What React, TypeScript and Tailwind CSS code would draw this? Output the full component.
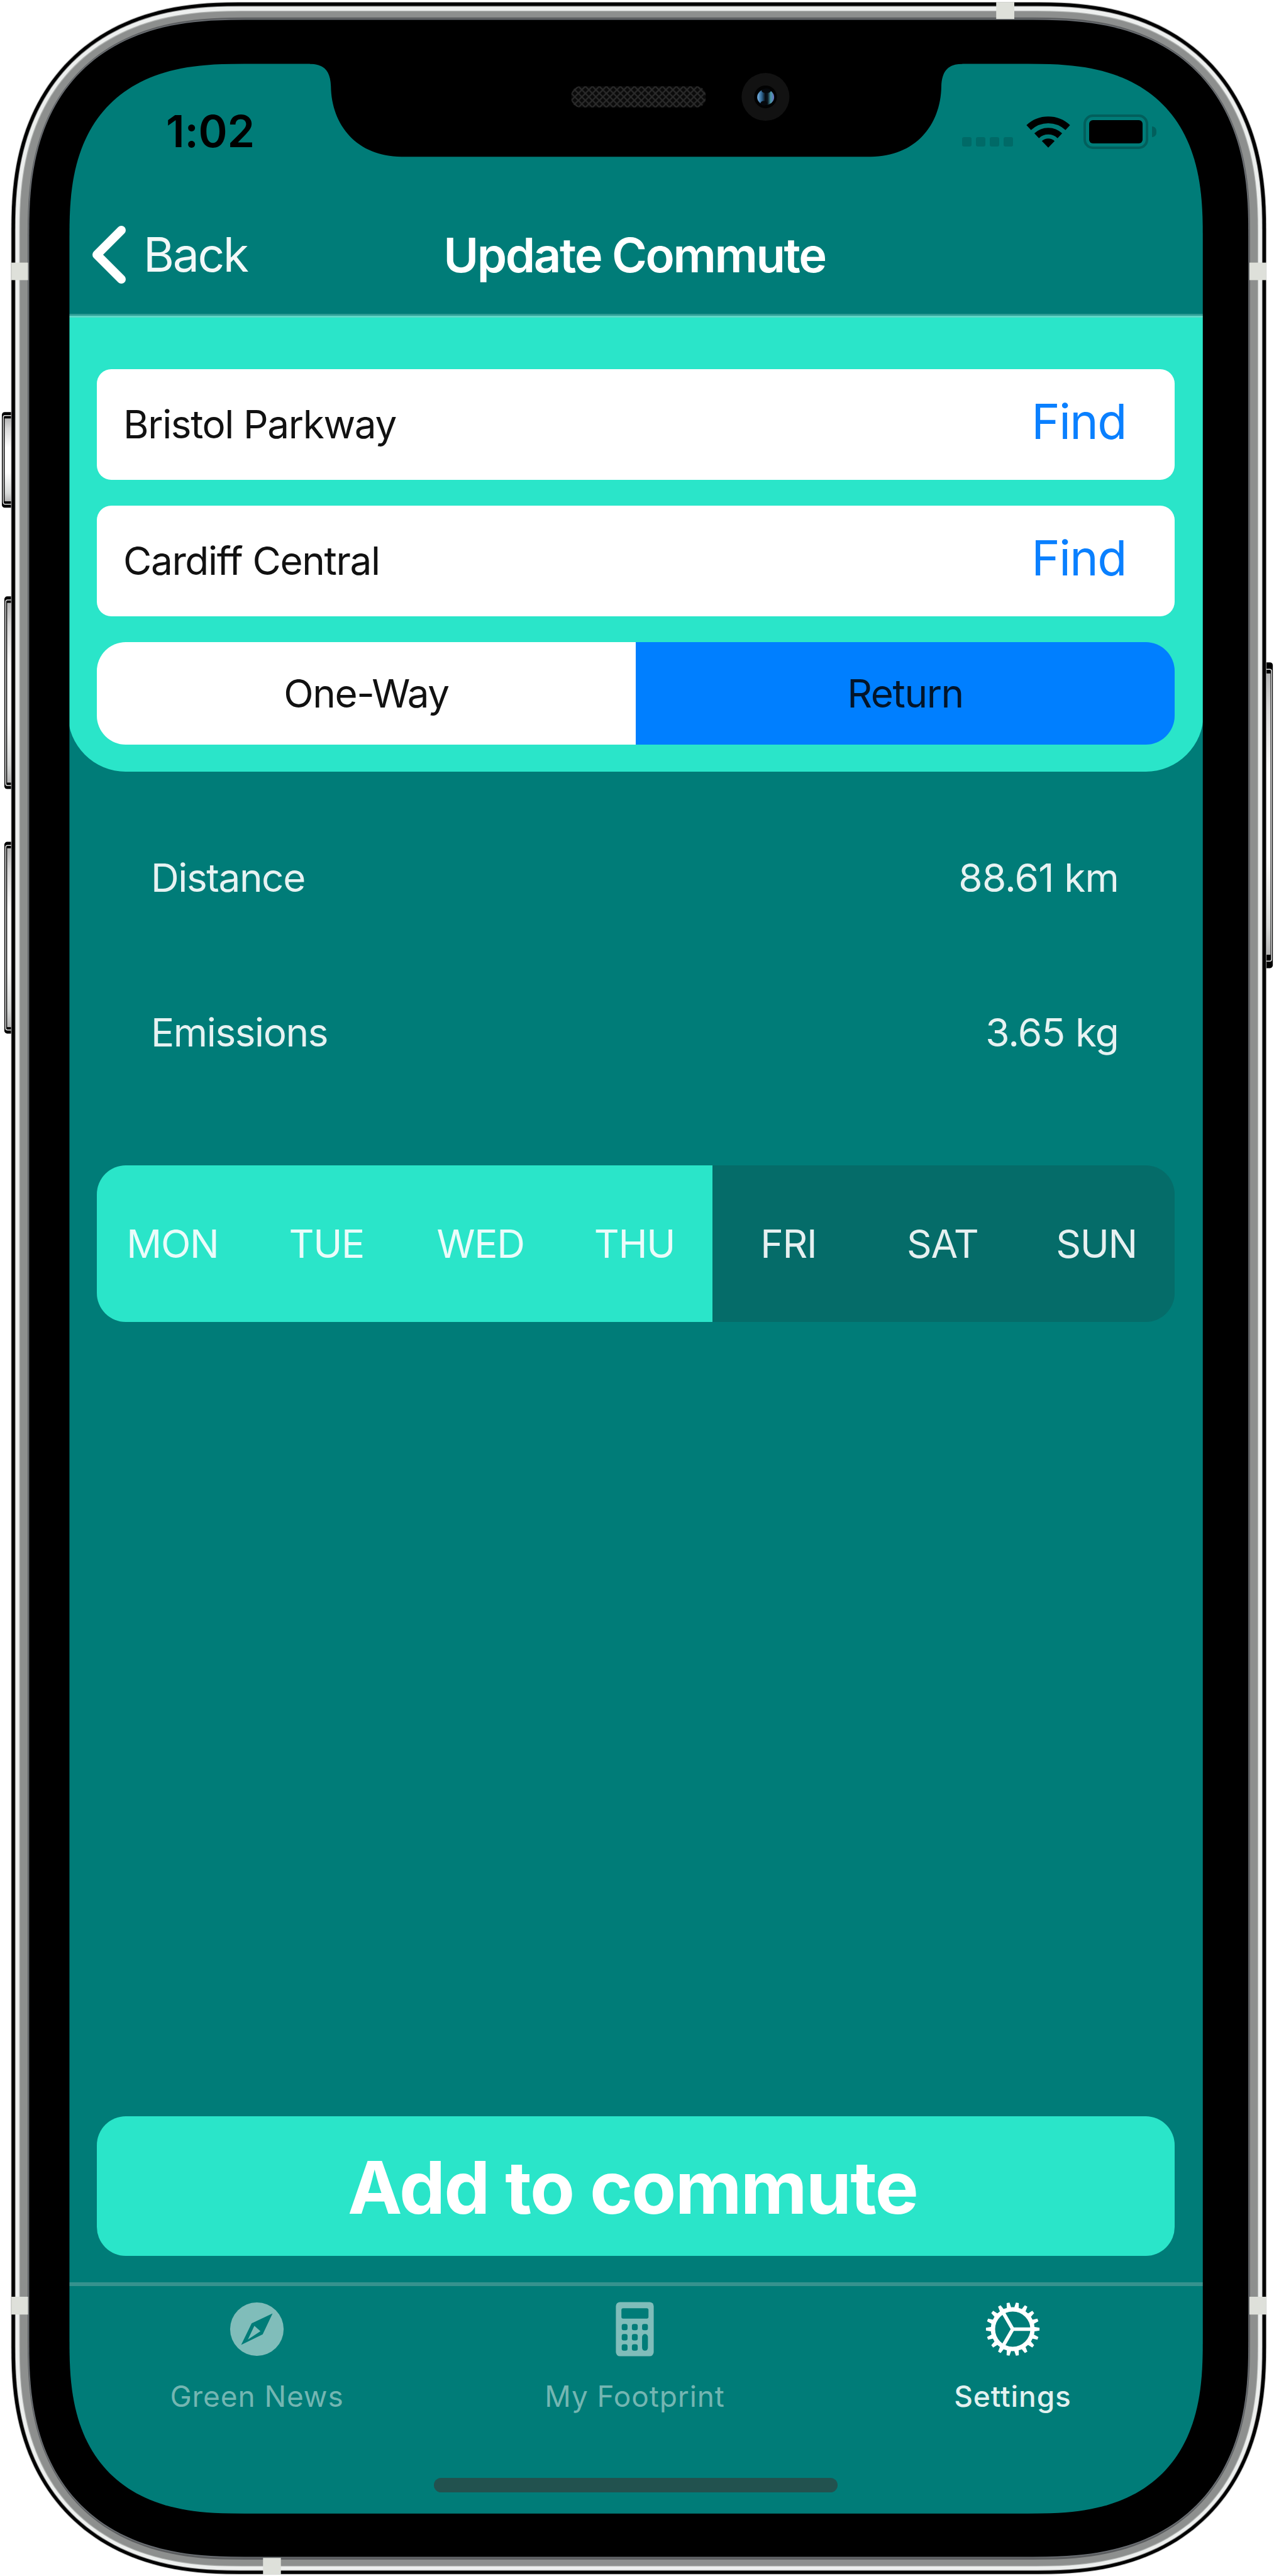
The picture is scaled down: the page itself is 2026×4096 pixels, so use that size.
import React from "react";

type Box = { l: number; t: number; r: number; b: number };

/** Path of a rectangle whose corners are superellipse arcs of extent `e` and exponent `n`. */
function smoothRect({ l, t, r, b }: Box, e: number, n: number): string {
  const steps = 48;
  const arc: [number, number][] = [];
  for (let i = 0; i <= steps; i++) {
    const a = (Math.PI / 2) * (i / steps);
    arc.push([
      e * (1 - Math.pow(Math.cos(a), 2 / n)),
      e * (1 - Math.pow(Math.sin(a), 2 / n)),
    ]);
  }
  const rev = [...arc].reverse();
  const pts = [
    ...arc.map(([x, y]) => [l + x, t + y]),
    ...rev.map(([x, y]) => [r - x, t + y]),
    ...arc.map(([x, y]) => [r - x, b - y]),
    ...rev.map(([x, y]) => [l + x, b - y]),
  ];
  return "M" + pts.map(([x, y]) => x.toFixed(2) + " " + y.toFixed(2)).join("L") + "Z";
}

const outline = smoothRect({ l: 119, t: 109.5, r: 2061, b: 4307 }, 300, 2.65);

const shell: { box: Box; e: number; n: number; fill: string }[] = [
  { box: { l: 18.8, t: 3.3, r: 2170.2, b: 4411.4 }, e: 391, n: 2.366, fill: "#a9a9a9" },
  { box: { l: 19.8, t: 4.4, r: 2169.2, b: 4410.4 }, e: 390, n: 2.366, fill: "#000000" },
  { box: { l: 25.6, t: 10, r: 2163.4, b: 4405 }, e: 386, n: 2.39, fill: "#808080" },
  { box: { l: 26.6, t: 11.2, r: 2162.4, b: 4404 }, e: 385, n: 2.39, fill: "#edefee" },
  { box: { l: 33, t: 18.4, r: 2156, b: 4397.6 }, e: 380, n: 2.43, fill: "#b0b3b1" },
  { box: { l: 34.3, t: 19.8, r: 2154.8, b: 4396.4 }, e: 379, n: 2.43, fill: "#8d8f8e" },
  { box: { l: 47.3, t: 30, r: 2142, b: 4386 }, e: 373, n: 2.5, fill: "#5b5d5f" },
  { box: { l: 48.4, t: 32.6, r: 2140.6, b: 4382.6 }, e: 371, n: 2.52, fill: "#6d7176" },
  { box: { l: 50, t: 34, r: 2139, b: 4381 }, e: 370, n: 2.526, fill: "#000000" },
];

const bands = [
  { x: 1707, y: 3.5, w: 31, h: 29 },
  { x: 19.5, y: 450, w: 28.5, h: 30 },
  { x: 2141, y: 450, w: 29, h: 30 },
  { x: 19.5, y: 3935.5, w: 28.5, h: 30.5 },
  { x: 2141, y: 3935.5, w: 29, h: 30.5 },
  { x: 450.7, y: 4383, w: 30.6, h: 28.4 },
];

const leftKeys = [
  { x: 3.2, y: 706, h: 164 },
  { x: 7.4, y: 1022, h: 330 },
  { x: 7.4, y: 1442.5, h: 328.5 },
];

function DeviceFrame() {
  return (
    <svg
      className="pointer-events-none absolute inset-0 h-[4096px] w-[2026px]"
      viewBox="0 0 2183 4414"
      preserveAspectRatio="none"
      aria-hidden="true"
    >
      <defs>
        <linearGradient id="key" x1="0" y1="0" x2="0" y2="1">
          <stop offset="0" stopColor="#b4b4b4" />
          <stop offset="0.12" stopColor="#d8d8d8" />
          <stop offset="0.35" stopColor="#ffffff" />
          <stop offset="0.65" stopColor="#ffffff" />
          <stop offset="0.9" stopColor="#d8dad9" />
          <stop offset="1" stopColor="#b4b4b4" />
        </linearGradient>
        <pattern id="mesh" width="12" height="12" patternUnits="userSpaceOnUse" x="979" y="148">
          <path d="M0 0L12 12M12 0L0 12" stroke="#2a2a2a" strokeWidth="2.4" />
        </pattern>
        <linearGradient id="lens" x1="0" y1="0" x2="1" y2="0">
          <stop offset="0" stopColor="#79b4e6" />
          <stop offset="0.28" stopColor="#2c618c" />
          <stop offset="0.48" stopColor="#05080c" />
          <stop offset="0.62" stopColor="#0b1620" />
          <stop offset="0.8" stopColor="#4a9aa8" />
          <stop offset="1" stopColor="#6a6cc0" />
        </linearGradient>
        <mask id="cutout">
          <rect width="2183" height="4414" fill="#fff" />
          <path d={outline} fill="#000" />
        </mask>
      </defs>

      {leftKeys.map((k) => (
        <g key={k.y}>
          <rect x={k.x} y={k.y} width={30} height={k.h} rx="5" fill="#000" />
          <rect x={k.x + 2.4} y={k.y + 6} width={30} height={k.h - 12} rx="3" fill="none" stroke="#e4e4e4" strokeWidth="1.6" />
          <rect x={k.x + 4.8} y={k.y + 11} width={20} height={k.h - 22} fill="url(#key)" />
        </g>
      ))}
      <rect x="2150" y="1135" width="31" height="524" rx="5" fill="#000" />
      <rect x="2150" y="1147" width="28.8" height="500" rx="3" fill="none" stroke="#e4e4e4" strokeWidth="1.6" />
      <rect x="2160" y="1154" width="17" height="482" fill="url(#key)" />

      <g mask="url(#cutout)">
        {shell.map((s, i) => (
          <path key={i} d={smoothRect(s.box, s.e, s.n)} fill={s.fill} />
        ))}
        {bands.map((b, i) => (
          <rect key={i} x={b.x} y={b.y} width={b.w} height={b.h} fill="#dee0da" />
        ))}
      </g>

      <path
        d="M531 108V109.5C556 110 566 122 567 148C568 215 612 268.5 688 268.5H1492C1568 268.5 1612 215 1613 148C1614 122 1624 110 1649 109.5V108Z"
        fill="#000"
      />
      <rect x="979" y="148" width="230" height="36" rx="15" fill="#0a0a0a" />
      <rect x="979" y="148" width="230" height="36" rx="15" fill="url(#mesh)" />
      <circle cx="1311.7" cy="166" r="41" fill="#121212" />
      <circle cx="1311.7" cy="166" r="19.5" fill="#020202" />
      <ellipse cx="1312" cy="166.5" rx="14.5" ry="13.5" fill="url(#lens)" />
      <ellipse cx="1313" cy="155.5" rx="8" ry="4" fill="#05080c" />
      <ellipse cx="1309" cy="177" rx="6" ry="4" fill="#05080c" />
    </svg>
  );
}

function WifiIcon() {
  return (
    <svg className="h-[54px] w-[72px]" viewBox="-39 -57 78 58" fill="none" stroke="#000" strokeWidth="11.5">
      <path d="M-33.6 -34.6A49 49 0 0 1 33.6 -34.6" />
      <path d="M-20 -20.5A29 29 0 0 1 20 -20.5" />
      <path d="M0 0L-11 -11.5A16 16 0 0 1 11 -11.5Z" fill="#000" stroke="none" />
    </svg>
  );
}

function StatusBar() {
  return (
    <div className="flex h-[216px] items-center pl-[156px] pr-[75px]">
      <span className="text-[70px] font-semibold leading-none tracking-[-0.2px] text-black">1:02</span>
      <div className="ml-auto flex items-center">
        <div className="mt-[33px] flex gap-[7px]">
          {[0, 1, 2, 3].map((i) => (
            <i key={i} className="block h-[15px] w-[15px] rounded-[3px] bg-[#006a67]" />
          ))}
        </div>
        <div className="ml-[20px]">
          <WifiIcon />
        </div>
        <div className="ml-[20px] h-[55px] w-[103px] rounded-[15px] border-[4px] border-[#025f5c] p-[5px]">
          <div className="h-full rounded-[6px] bg-black" />
        </div>
        <div className="ml-[6px] h-[17px] w-[7px] rounded-r-full bg-[#025f5c]" />
      </div>
    </div>
  );
}

function NavBar() {
  return (
    <div className="grid h-[182px] grid-cols-[1fr_auto_1fr] items-center pb-[7px] pr-[6px] text-[76px] leading-none text-white">
      <div className="flex items-center pl-[37px]">
        <svg className="h-[94px] w-[58px]" viewBox="0 0 58 94" fill="none" stroke="#fff" strokeWidth="14" strokeLinecap="round" strokeLinejoin="round">
          <path d="M48 8L9 47L48 86" />
        </svg>
        <span className="ml-[25px] text-[75px] tracking-[-2.4px] text-white/95">Back</span>
      </div>
      <h1 className="mr-[-2px] font-semibold tracking-[-2.4px]">Update Commute</h1>
    </div>
  );
}

function StationField({ name }: { name: string }) {
  return (
    <div className="flex h-[176px] items-center justify-between rounded-[23px] bg-white pl-[42px] pr-[77px]">
      <span className="text-[62px] leading-none tracking-[-1.35px] text-[#111]">{name}</span>
      <button className="pb-[9px] text-[77px] leading-none tracking-[-1.5px] text-[#0a80ff]">Find</button>
    </div>
  );
}

function Metric({ label, value }: { label: string; value: string }) {
  return (
    <div className="flex h-[246px] items-center justify-between pl-[132px] pr-[135px] text-[62px] leading-none text-white/90">
      <span className="tracking-[-1.4px]">{label}</span>
      <span className="tracking-[-0.8px]">{value}</span>
    </div>
  );
}

const days = [
  { name: "MON", on: true },
  { name: "TUE", on: true },
  { name: "WED", on: true },
  { name: "THU", on: true },
  { name: "FRI", on: false },
  { name: "SAT", on: false },
  { name: "SUN", on: false },
];

function DayPicker() {
  return (
    <div className="mx-[46px] mt-[88px] grid h-[249px] shrink-0 grid-cols-7 overflow-hidden rounded-[46px]">
      {days.map((d) => (
        <div
          key={d.name}
          className={
            "flex items-center justify-center pr-[4px] text-[62px] leading-none tracking-[-1.3px] text-white/90 " +
            (d.on ? "bg-[#2ae5c9]" : "bg-[#056c69]")
          }
        >
          {d.name}
        </div>
      ))}
    </div>
  );
}

function CompassIcon() {
  return (
    <svg className="h-[87px] w-[87px]" viewBox="-47 -47 94 94">
      <circle r="46" fill="#80bdba" />
      <path d="M27 -27L10 9L-27 27L-9 -10Z" fill="#007c78" />
      <path d="M-4 -4L4.500 3.500L-13 15Z" fill="#80bdba" stroke="#80bdba" strokeWidth="2" />
    </svg>
  );
}

function CalculatorIcon() {
  const cols = [15.5, 33, 50.5];
  return (
    <svg className="h-[87px] w-[87px]" viewBox="-14 0 94 94">
      <rect x="0.500" y="0.500" width="65" height="93" rx="7" fill="#80bdba" />
      <g fill="#007c78">
        <rect x="10" y="11" width="46.500" height="18" rx="3" />
        {[43.5, 61, 78.500].map((y, row) =>
          cols
            .filter((_, c) => !(row > 0 && c === 2))
            .map((x) => <rect key={x + "-" + y} x={x - 5} y={y - 5.500} width="10" height="11" rx="3.500" />)
        )}
        <rect x="45.500" y="55.500" width="10" height="28.500" rx="5" />
      </g>
    </svg>
  );
}

function GearIcon() {
  return (
    <svg className="h-[87px] w-[87px]" viewBox="-47 -47 94 94" fill="none" stroke="#fff">
      <circle r="34" strokeWidth="7.500" />
      {Array.from({ length: 18 }, (_, i) => (
        <path key={i} d="M36 -4L46 -2.500V2.500L36 4Z" fill="#fff" stroke="none" transform={`rotate(${i * 20})`} />
      ))}
      {[0, 120, 240].map((a) => (
        <path key={a} d="M0 0H34" strokeWidth="6" transform={`rotate(${a})`} />
      ))}
    </svg>
  );
}

function Tab({ icon, label, active }: { icon: React.ReactNode; label: string; active?: boolean }) {
  return (
    <div className="flex flex-col items-center pt-[25px]">
      {icon}
      <span
        className={
          "mt-[40px] text-[46px] leading-none tracking-[0.9px] " +
          (active ? "font-medium text-[#e2f1f0]" : "text-[#74b6b2]")
        }
      >
        {label}
      </span>
    </div>
  );
}

export default function App() {
  return (
    <div className="relative h-[4096px] w-[2026px] overflow-hidden bg-white pl-[108px] pt-[101px] font-['Inter',sans-serif]">
      <main className="flex h-[3899px] w-[1806px] flex-col bg-[#007c78]">
        <header>
          <StatusBar />
          <NavBar />
          <div className="h-[3px] bg-[#2f9d96]" />
          <div className="h-[3px] bg-[#5fd8c8]" />
        </header>

        <section className="flex flex-col gap-[41px] rounded-b-[92px] bg-[#2ae5c9] px-[46px] pb-[43px] pt-[82px]">
          <StationField name="Bristol Parkway" />
          <StationField name="Cardiff Central" />
          <div className="grid h-[163px] grid-cols-2 overflow-hidden rounded-[46px] text-[62px] leading-none tracking-[-1.4px] text-[#111]">
            <div className="flex items-center justify-center bg-white">One-Way</div>
            <div className="flex items-center justify-center bg-[#007fff] text-[#03152a]">Return</div>
          </div>
        </section>

        <section className="mt-[46px]">
          <Metric label="Distance" value="88.61 km" />
          <Metric label="Emissions" value="3.65 kg" />
        </section>

        <DayPicker />

        <button className="mx-[46px] mt-auto h-[222px] shrink-0 rounded-[46px] bg-[#2ae5c9] pr-[10px] pt-[4px] text-[116px] font-bold leading-none tracking-[-1.8px] text-white">
          Add to commute
        </button>

        <nav className="relative mt-[42px] grid h-[371px] shrink-0 grid-cols-3 border-t-[6px] border-[#36928e] pr-[3px]">
          <Tab icon={<CompassIcon />} label="Green News" />
          <Tab icon={<CalculatorIcon />} label="My Footprint" />
          <Tab icon={<GearIcon />} label="Settings" active />
          <div className="absolute left-1/2 top-[305px] h-[23px] w-[642px] -translate-x-1/2 rounded-full bg-[#22524f]" />
        </nav>
      </main>
      <DeviceFrame />
    </div>
  );
}
